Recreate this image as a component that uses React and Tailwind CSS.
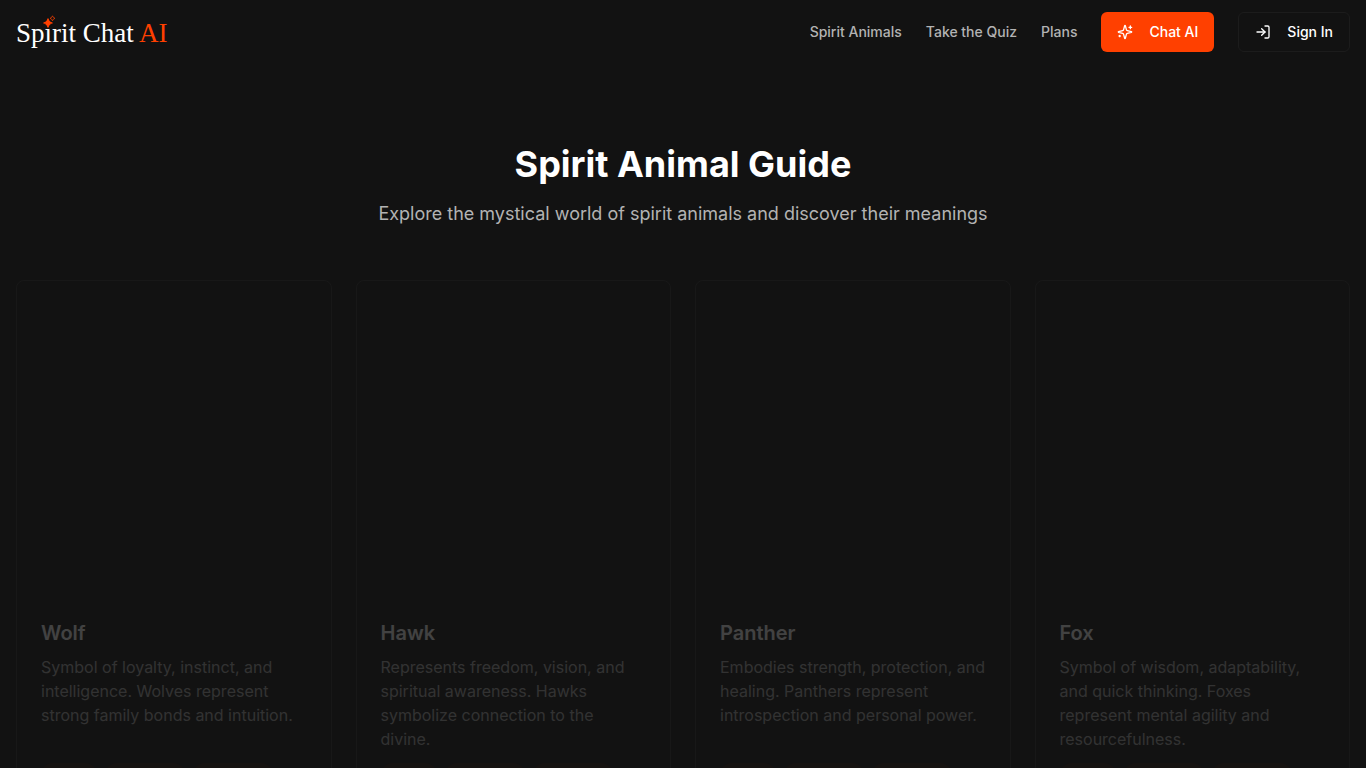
import React from "react";
import { LogIn } from "lucide-react";

const navLinks = [
  { label: "Spirit Animals", href: "#spirit-animals" },
  { label: "Take the Quiz", href: "#quiz" },
  { label: "Plans", href: "#plans" },
];

const animals = [
  {
    name: "Wolf",
    description:
      "Symbol of loyalty, instinct, and intelligence. Wolves represent strong family bonds and intuition.",
  },
  {
    name: "Hawk",
    description:
      "Represents freedom, vision, and spiritual awareness. Hawks symbolize connection to the divine.",
  },
  {
    name: "Panther",
    description:
      "Embodies strength, protection, and healing. Panthers represent introspection and personal power.",
  },
  {
    name: "Fox",
    description:
      "Symbol of wisdom, adaptability, and quick thinking. Foxes represent mental agility and resourcefulness.",
  },
];

const Logo = () => (
  <a
    href="#home"
    className="relative whitespace-nowrap pt-0.5 text-[27px] leading-8 text-white font-['Liberation_Serif',serif]"
  >
    {/* dotless i, the sparkle takes the place of the dot */}
    Spırit Chat <span className="text-[#ff4000]">AI</span>
    <svg className="absolute left-[27px] top-0 w-3.5 h-3.5" viewBox="0 0 14 14" fill="#ff4000" aria-hidden="true">
      <path d="M5 3.5 Q5.6 7.4 9.5 8 Q5.6 8.6 5 12.5 Q4.4 8.6 0.5 8 Q4.4 7.4 5 3.5Z" stroke="#ff4000" strokeWidth="1.2" />
      <path d="M9.5 0.8 Q10 2.8 12 3.3 Q10 3.8 9.5 5.8 Q9 3.8 7 3.3 Q9 2.8 9.5 0.8Z" fill="none" stroke="#ff4000" strokeWidth="0.7" />
    </svg>
  </a>
);

const SparklesIcon = ({ className }) => (
  <svg
    className={className}
    viewBox="0 0 24 24"
    fill="none"
    stroke="currentColor"
    strokeWidth={2}
    strokeLinecap="round"
    strokeLinejoin="round"
    aria-hidden="true"
  >
    <path d="M9.937 15.5A2 2 0 0 0 8.5 14.063l-6.135-1.582a.5.5 0 0 1 0-.962L8.5 9.936A2 2 0 0 0 9.937 8.5l1.582-6.135a.5.5 0 0 1 .963 0L14.063 8.5A2 2 0 0 0 15.5 9.937l6.135 1.581a.5.5 0 0 1 0 .964L15.5 14.063a2 2 0 0 0-1.437 1.437l-1.582 6.135a.5.5 0 0 1-.963 0z" />
    <path d="M20 3v4M22 5h-4M4 17v2M5 18H3" />
  </svg>
);

const AnimalCard = ({ animal }) => (
  <article className="flex flex-col rounded-lg border border-[#333333] overflow-hidden opacity-20">
    <div className="aspect-square" />
    <div className="flex flex-1 flex-col p-6">
      <h2 className="text-xl font-semibold text-white mb-2">{animal.name}</h2>
      <p className="flex-1 text-base text-[#b3b3b3]">{animal.description}</p>
      {/* Trait chip placeholders */}
      <div className="flex gap-2 mt-3">
        <span className="h-6 w-14 rounded-full bg-[#ff4000]/10" />
        <span className="h-6 w-20 rounded-full bg-[#ff4000]/10" />
        <span className="h-6 w-20 rounded-full bg-[#ff4000]/10" />
      </div>
    </div>
  </article>
);

const App = () => {
  return (
    <div className="min-h-screen bg-[#121212] text-white font-['Inter',sans-serif]">
      <header className="flex h-16 items-center justify-between px-4">
        <Logo />
        <nav className="flex items-center gap-6 text-sm font-medium">
          {navLinks.map((link) => (
            <a key={link.label} href={link.href} className="text-[#b3b3b3] hover:text-white transition">
              {link.label}
            </a>
          ))}
          <button className="flex h-10 items-center gap-4 rounded-md bg-[#ff4000] px-4 hover:bg-[#e63900] transition">
            <SparklesIcon className="w-4 h-4" />
            Chat AI
          </button>
          <button className="flex h-10 items-center gap-4 rounded-md border border-[#1c1c1c] px-4 hover:bg-[#1c1c1c] transition">
            <LogIn className="w-4 h-4" />
            Sign In
          </button>
        </nav>
      </header>

      <main className="px-4 pt-20 pb-16">
        {/* Page heading */}
        <div className="text-center mb-13">
          <h1 className="text-4xl font-bold mb-4">Spirit Animal Guide</h1>
          <p className="text-lg text-[#b3b3b3]">
            Explore the mystical world of spirit animals and discover their meanings
          </p>
        </div>

        {/* Animal cards */}
        <div className="grid grid-cols-1 sm:grid-cols-2 lg:grid-cols-4 gap-6">
          {animals.map((animal) => (
            <AnimalCard key={animal.name} animal={animal} />
          ))}
        </div>
      </main>
    </div>
  );
};

export default App;
